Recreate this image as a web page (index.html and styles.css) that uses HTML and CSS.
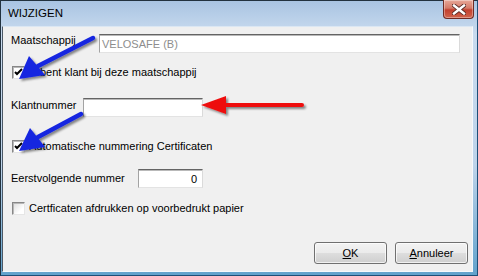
FILE: index.html
```html
<!doctype html>
<html>
    <head>
        <title>Wijzigen</title>
        <meta name="viewport" content="width=device-width, initial-scale=1">
        <link rel="stylesheet" href="styles.css">
    </head>
    <body>
        <section class="window">
            <header class="titlebar">
                <span class="title">WIJZIGEN</span>
                <button class="close" aria-label="Sluiten">
                    <svg width="14" height="11" viewBox="0 0 14 11">
                        <path d="M2 1.5 L12 9.5 M12 1.5 L2 9.5" stroke="#5a2a24" stroke-width="4.2" stroke-linecap="square"/>
                        <path d="M2 1.5 L12 9.5 M12 1.5 L2 9.5" stroke="#fff" stroke-width="2.4" stroke-linecap="square"/>
                    </svg>
                </button>
            </header>

            <div class="content">
                <div class="row row-company">
                    <span class="label w-company">Maatschappij</span>
                    <div class="field wide readonly">VELOSAFE (B)</div>
                </div>

                <label class="check row-client">
                    <span class="box checked"></span>
                    <span>U bent klant bij deze maatschappij</span>
                </label>

                <div class="row row-number">
                    <span class="label w-number">Klantnummer</span>
                    <div class="field medium"></div>
                </div>

                <label class="check row-auto">
                    <span class="box checked"></span>
                    <span>Automatische nummering Certificaten</span>
                </label>

                <div class="row row-next">
                    <span class="label w-next">Eerstvolgende nummer</span>
                    <div class="field small num">0</div>
                </div>

                <label class="check row-print">
                    <span class="box"></span>
                    <span>Certficaten afdrukken op voorbedrukt papier</span>
                </label>

                <div class="buttons">
                    <button class="btn"><u>O</u>K</button>
                    <button class="btn"><u>A</u>nnuleer</button>
                </div>
            </div>

            <!-- annotation arrows drawn over the dialog -->
            <svg class="arrows" width="478" height="276" viewBox="0 0 478 276">
                <defs>
                    <filter id="shadow" x="-20%" y="-20%" width="140%" height="160%">
                        <feDropShadow dx="2" dy="2" stdDeviation="1.2" flood-color="#000" flood-opacity="0.45"/>
                    </filter>
                </defs>
                <g filter="url(#shadow)" fill="#1726e0" stroke="#1726e0">
                    <line x1="93" y1="38" x2="38" y2="66" stroke-width="4.5" stroke-linecap="round"/>
                    <polygon points="19,79 45,75 29,56" stroke="none"/>
                </g>
                <g filter="url(#shadow)" fill="#1726e0" stroke="#1726e0">
                    <line x1="81" y1="114" x2="38" y2="137" stroke-width="4.5" stroke-linecap="round"/>
                    <polygon points="19,151 45,147 30,128" stroke="none"/>
                </g>
                <g filter="url(#shadow)" fill="#ee1111" stroke="#ee1111">
                    <line x1="302" y1="105" x2="222" y2="105" stroke-width="4" stroke-linecap="round"/>
                    <polygon points="201,105 226,96 226,114" stroke="none"/>
                </g>
            </svg>
        </section>
    </body>
</html>
```

FILE: styles.css
```css
html, body {
    margin: 0;
    background: #fff;
    font-family: "Liberation Sans", Arial, sans-serif;
    font-size: 11px;
}

.window {
    position: relative;
    width: 478px;
    height: 276px;
    box-sizing: border-box;
    display: flex;
    flex-direction: column;
    border: 1px solid #22323f;
    border-right-color: #1d4f78;
    border-bottom-color: #1d4f78;
    padding: 0 4px 3px 1px;
    background: linear-gradient(to bottom, #a9c4e2, #c9dbef 12%, #bdd3ea 60%, #62a2cc);
}

.titlebar {
    height: 25px;
    display: flex;
    align-items: center;
    justify-content: space-between;
    padding-left: 6px;
}

.title {
    color: #000;
    font-size: 11.5px;
    margin-top: -1px;
}

.close {
    align-self: flex-start;
    width: 31px;
    height: 19px;
    margin-top: -1px;
    margin-right: -1px;
    padding: 0;
    display: flex;
    align-items: center;
    justify-content: center;
    border: 1px solid #6e2b24;
    border-top: none;
    border-radius: 0 0 4px 4px;
    background: linear-gradient(to bottom, #e8a898, #d47a68 45%, #c2402e 55%, #d0644c);
    box-shadow: inset 0 0 0 1px rgba(255, 255, 255, .35);
}

.content {
    flex: 1;
    display: flex;
    flex-direction: column;
    background: #f0f0f0;
    border: 1px solid;
    border-color: #dbe7f3 #f6f9fc #f6f9fc #4b5866;
    padding: 0 0 0 8px;
}

.row {
    display: flex;
    align-items: flex-start;
    height: 19px;
}

.label {
    color: #000;
    line-height: 13px;
    white-space: nowrap;
    flex-shrink: 0;
}

.w-company { width: 88px; margin-top: 0; }
.w-number { width: 72px; margin-top: 1px; }
.w-next { width: 127px; margin-top: 3px; }

.row-company { margin-top: 7px; }
.row-client { margin-top: 13px; }
.row-number { margin-top: 19px; }
.row-auto { margin-top: 23px; }
.row-next { margin-top: 16px; }
.row-print { margin-top: 14px; }

.field {
    box-sizing: border-box;
    height: 19px;
    background: #fff;
    border: 1px solid;
    border-color: #646464 #dadada #e3e3e3 #a3a3a3;
    box-shadow: inset 0 1px 0 #b9b9b9;
    padding: 2px 2px 0;
    line-height: 14px;
    color: #000;
}

.field.wide { width: 361px; }
.field.medium { width: 120px; }
.field.small { width: 65px; }

.field.readonly {
    color: #8d8d8d;
}

.field.num {
    text-align: right;
    padding-right: 5px;
}

.check {
    display: flex;
    align-items: center;
    height: 13px;
    gap: 4px;
    margin-left: 1px;
    line-height: 13px;
    white-space: nowrap;
}

.box {
    width: 13px;
    height: 13px;
    box-sizing: border-box;
    background: linear-gradient(135deg, #dcdcdc, #fff 70%);
    border: 1px solid;
    border-color: #878787 #e6e6e6 #e6e6e6 #878787;
    box-shadow: inset 1px 1px 0 #b8b8b8;
    flex-shrink: 0;
}

.box.checked {
    background: #fff url("data:image/svg+xml,%3Csvg xmlns='http://www.w3.org/2000/svg' width='11' height='11'%3E%3Cpath d='M2 5 L4 7 L9 2' stroke='%23000' stroke-width='2' fill='none'/%3E%3C/svg%3E") no-repeat center;
}

.buttons {
    display: flex;
    justify-content: flex-end;
    gap: 8px;
    margin-top: 27px;
    margin-right: 4px;
}

.btn {
    width: 73px;
    height: 22px;
    padding: 0;
    font-family: inherit;
    font-size: 11px;
    color: #000;
    border: 1px solid #707070;
    border-radius: 3px;
    background: linear-gradient(to bottom, #f3f3f3, #ebebeb 48%, #dddddd 52%, #cfcfcf);
    box-shadow: inset 0 0 0 1px rgba(255, 255, 255, .7);
}

.btn u {
    text-decoration: underline;
}

.arrows {
    position: absolute;
    left: -1px;
    top: -1px;
    pointer-events: none;
}
```
